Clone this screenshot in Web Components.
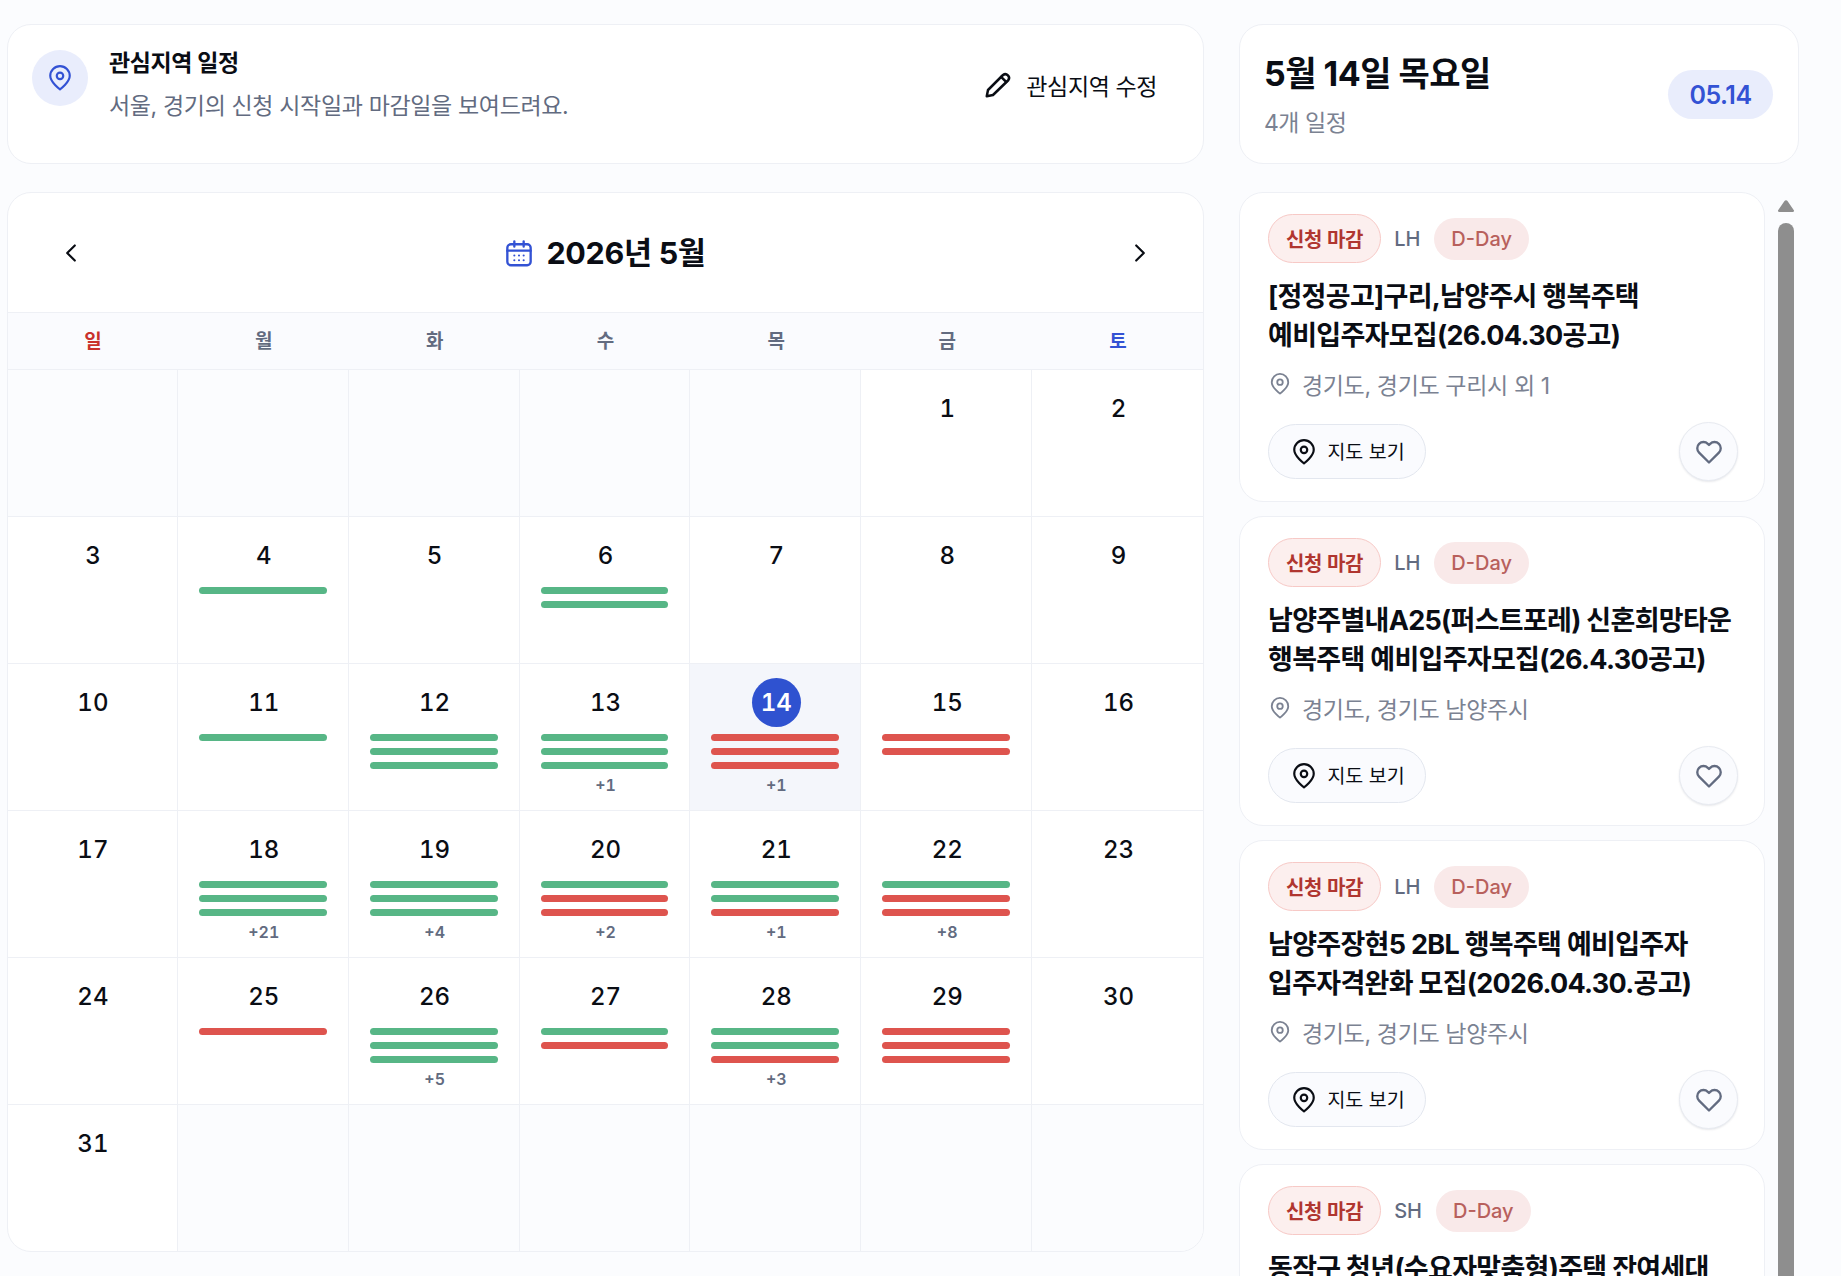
<!DOCTYPE html>
<html lang="ko">
<head>
<meta charset="utf-8">
<title>관심지역 일정</title>
<style>
  html, body { margin: 0; height: 100%; }
  body {
    background: #fbfcfe;
    color: #0a0d14;
    font-family: "Inter", "Noto Sans CJK KR", sans-serif;
    overflow: hidden;
  }
</style>
</head>
<body>
<app-page>
  <region-card slot="region"></region-card>
  <date-card slot="date"></date-card>
  <cal-view slot="calendar"></cal-view>
  <notice-list slot="list">
    <notice-card org="LH">
      <span slot="title">[정정공고]구리,남양주시 행복주택<br>예비입주자모집(26.04.30공고)</span>
      <span slot="place">경기도, 경기도 구리시 외 1</span>
    </notice-card>
    <notice-card org="LH">
      <span slot="title">남양주별내A25(퍼스트포레) 신혼희망타운<br>행복주택 예비입주자모집(26.4.30공고)</span>
      <span slot="place">경기도, 경기도 남양주시</span>
    </notice-card>
    <notice-card org="LH">
      <span slot="title">남양주장현5 2BL 행복주택 예비입주자<br>입주자격완화 모집(2026.04.30.공고)</span>
      <span slot="place">경기도, 경기도 남양주시</span>
    </notice-card>
    <notice-card org="SH">
      <span slot="title">동작구 청년(수요자맞춤형)주택 잔여세대</span>
    </notice-card>
  </notice-list>
</app-page>

<script>
const PIN = (color, w) => `<svg viewBox="0 0 24 24" fill="none" stroke="${color}" stroke-width="${w}" stroke-linecap="round" stroke-linejoin="round"><path d="M12 22.500C12 22.500 3 16 3 10a9 9 0 0 1 18 0C21 16 12 22.500 12 22.500z"/><circle cx="12" cy="10" r="3"/></svg>`;

class AppPage extends HTMLElement {
  connectedCallback() {
    this.attachShadow({ mode: 'open' });
    this.shadowRoot.innerHTML = `
      <style>
        :host {
          display: grid;
          grid-template-columns: 1197px 560px;
          grid-template-rows: 140px 1fr;
          column-gap: 35px;
          row-gap: 28px;
          box-sizing: border-box;
          height: 1276px;
          padding: 24px 0 0 7px;
          overflow: hidden;
        }
      </style>
      <slot name="region"></slot>
      <slot name="date"></slot>
      <slot name="calendar"></slot>
      <slot name="list"></slot>
    `;
  }
}

class RegionCard extends HTMLElement {
  connectedCallback() {
    this.attachShadow({ mode: 'open' });
    this.shadowRoot.innerHTML = `
      <style>
        :host {
          display: flex;
          box-sizing: border-box;
          height: 140px;
          padding: 25px 46px 0 24px;
          background: #fff;
          border: 1px solid #eef0f5;
          border-radius: 24px;
        }
        .icon {
          flex: none;
          width: 56px;
          height: 56px;
          border-radius: 50%;
          background: #e9edfc;
          display: flex;
          align-items: center;
          justify-content: center;
        }
        .icon svg { width: 26px; height: 26px; }
        .text { margin-left: 21px; flex: 1; margin-top: -1px; }
        .title { font-size: 23px; font-weight: 600; line-height: 28px; letter-spacing: -0.45px; }
        .sub { font-size: 23px; line-height: 32px; margin-top: 13px; color: #626b80; letter-spacing: -0.35px; }
        .edit { display: flex; align-items: center; gap: 13px; height: 30px; margin-top: 20px; font-size: 23px; letter-spacing: -0.4px; }
        .edit svg { width: 30px; height: 30px; }
      </style>
      <div class="icon">${PIN('#3352d4', 2)}</div>
      <div class="text">
        <div class="title">관심지역 일정</div>
        <div class="sub">서울, 경기의 신청 시작일과 마감일을 보여드려요.</div>
      </div>
      <div class="edit">
        <svg viewBox="0 0 24 24" fill="none" stroke="#0a0d14" stroke-width="2" stroke-linecap="round" stroke-linejoin="round"><path d="M3 21l1-5L16 4a3 3 0 0 1 4.200 4.200L8 20z"/><path d="M14.500 5.500l4 4"/></svg>
        <span>관심지역 수정</span>
      </div>
    `;
  }
}

class DateCard extends HTMLElement {
  connectedCallback() {
    this.attachShadow({ mode: 'open' });
    this.shadowRoot.innerHTML = `
      <style>
        :host {
          display: flex;
          align-items: center;
          justify-content: space-between;
          box-sizing: border-box;
          height: 140px;
          padding: 0 25px 0 24px;
          background: #fff;
          border: 1px solid #eef0f5;
          border-radius: 24px;
        }
        .info { padding-top: 2px; }
        .day { font-size: 34px; font-weight: 700; line-height: 44px; letter-spacing: -0.5px; }
        .count { font-size: 23px; line-height: 30px; margin-top: 12px; color: #7b8292; letter-spacing: -0.5px; }
        .pill {
          box-sizing: border-box;
          height: 49px;
          width: 105px;
          padding-top: 2px;
          border-radius: 25px;
          background: #e9edfc;
          color: #3352d4;
          font-size: 25px;
          font-weight: 600;
          letter-spacing: -0.5px;
          display: flex;
          align-items: center;
          justify-content: center;
        }
      </style>
      <div class="info">
        <div class="day">5월 14일 목요일</div>
        <div class="count">4개 일정</div>
      </div>
      <div class="pill">05.14</div>
    `;
  }
}

// g = green bar, r = red bar
const DAYS = {
  4: ['g'], 6: ['g', 'g'], 11: ['g'],
  12: ['g', 'g', 'g'], 13: ['g', 'g', 'g', 1], 14: ['r', 'r', 'r', 1], 15: ['r', 'r'],
  18: ['g', 'g', 'g', 21], 19: ['g', 'g', 'g', 4], 20: ['g', 'r', 'r', 2], 21: ['g', 'g', 'r', 1], 22: ['g', 'r', 'r', 8],
  25: ['r'], 26: ['g', 'g', 'g', 5], 27: ['g', 'r'], 28: ['g', 'g', 'r', 3], 29: ['r', 'r', 'r']
};

class CalCell extends HTMLElement {
  set data({ day, items, today }) {
    if (!this.shadowRoot) this.attachShadow({ mode: 'open' });
    const bars = (items || []).filter(i => typeof i === 'string')
      .map(i => `<div class="bar ${i}"></div>`).join('');
    const more = (items || []).find(i => typeof i === 'number');
    this.shadowRoot.innerHTML = `
      <style>
        :host {
          display: flex;
          flex-direction: column;
          align-items: center;
          box-sizing: border-box;
          padding: 14px 21px 0;
          border-top: 1px solid #eef0f5;
          border-right: 1px solid #eef0f5;
          min-width: 0;
          font-variant-numeric: tabular-nums;
        }
        :host(:nth-child(7n)) { border-right: 0; }
        :host([empty]) { background: #fbfcfe; }
        :host([today]) { background: #f4f6fb; }
        .num {
          flex: none;
          width: 49px;
          height: 49px;
          margin-left: 2px;
          border-radius: 50%;
          display: flex;
          align-items: center;
          justify-content: center;
          font-size: 24px;
          font-weight: 550;
          margin-bottom: 7px;
        }
        .today { background: #2f52d0; color: #fff; font-weight: 600; }
        .bar { align-self: stretch; height: 7px; border-radius: 4px; margin-bottom: 7px; }
        .g { background: #57b686; }
        .r { background: #de544e; }
        .more { margin-left: 2px; font-size: 16px; font-weight: 600; color: #626b80; line-height: 18px; }
      </style>
      ${day ? `<div class="num ${today ? 'today' : ''}">${day}</div>` : ''}
      ${bars}
      ${more ? `<div class="more">+${more}</div>` : ''}
    `;
  }
}

class CalView extends HTMLElement {
  connectedCallback() {
    this.attachShadow({ mode: 'open' });
    const names = ['일', '월', '화', '수', '목', '금', '토'];
    this.shadowRoot.innerHTML = `
      <style>
        :host {
          display: block;
          box-sizing: border-box;
          height: 1060px;
          background: #fff;
          border: 1px solid #eef0f5;
          border-radius: 24px;
          overflow: hidden;
        }
        .head {
          height: 119px;
          display: flex;
          align-items: center;
          justify-content: space-between;
          padding: 0 50px 0 50px;
        }
        .head svg.nav { width: 26px; height: 26px; }
        .month { display: flex; align-items: center; gap: 13px; font-size: 30.500px; font-weight: 700; letter-spacing: -0.3px; }
        .month span { padding-bottom: 3px; }
        .month svg { width: 28px; height: 28px; }
        .week {
          display: grid;
          grid-template-columns: repeat(7, 1fr);
          height: 56px;
          margin-left: -1px;
          background: #fafbfe;
          border-top: 1px solid #eef0f5;
        }
        .week div {
          display: flex;
          align-items: center;
          justify-content: center;
          padding: 0 0 4px 1px;
          font-size: 19px;
          font-weight: 600;
          color: #626b80;
        }
        .week .sun { color: #c9302c; }
        .week .sat { color: #3352d4; }
        .grid {
          display: grid;
          grid-template-columns: repeat(7, 1fr);
          grid-auto-rows: 147px;
          margin-left: -1px;
        }
      </style>
      <div class="head">
        <svg class="nav" viewBox="0 0 24 24" fill="none" stroke="#0a0d14" stroke-width="2" stroke-linecap="round" stroke-linejoin="round"><path d="M15.500 5l-7 7 7 7"/></svg>
        <div class="month">
          <svg viewBox="0 0 24 24" fill="none" stroke="#3352d4" stroke-width="2" stroke-linecap="round" stroke-linejoin="round"><rect x="2" y="4.500" width="20" height="18" rx="3"/><path d="M2 10h20M8 2v4.500M16 2v4.500"/><path d="M8 14.200h.01M12 14.200h.01M16 14.200h.01M8 18.200h.01M12 18.200h.01M16 18.200h.01" stroke-width="1.800"/></svg>
          <span>2026년 5월</span>
        </div>
        <svg class="nav" viewBox="0 0 24 24" fill="none" stroke="#0a0d14" stroke-width="2" stroke-linecap="round" stroke-linejoin="round"><path d="M8.500 5l7 7-7 7"/></svg>
      </div>
      <div class="week">${names.map((n, i) => `<div class="${i === 0 ? 'sun' : i === 6 ? 'sat' : ''}">${n}</div>`).join('')}</div>
      <div class="grid"></div>
    `;
    const grid = this.shadowRoot.querySelector('.grid');
    // May 2026 starts on a Friday
    for (let i = 0; i < 42; i++) {
      const day = i - 4 >= 1 && i - 4 <= 31 ? i - 4 : 0;
      const cell = document.createElement('cal-cell');
      if (!day) cell.setAttribute('empty', '');
      if (day === 14) cell.setAttribute('today', '');
      cell.data = { day, items: DAYS[day], today: day === 14 };
      grid.appendChild(cell);
    }
  }
}

class NoticeList extends HTMLElement {
  connectedCallback() {
    this.attachShadow({ mode: 'open' });
    this.shadowRoot.innerHTML = `
      <style>
        :host { display: flex; min-height: 0; overflow: hidden; }
        .items { width: 526px; flex: none; display: flex; flex-direction: column; gap: 14px; }
        .bar { width: 16px; margin-left: 13px; flex: none; display: flex; flex-direction: column; padding-top: 8px; }
        .bar svg { width: 16px; height: 12px; display: block; }
        .thumb { flex: 1; margin-top: 11px; background: #8e8e8e; border-radius: 8px 8px 0 0; }
      </style>
      <div class="items"><slot></slot></div>
      <div class="bar">
        <svg viewBox="0 0 16 12"><path d="M6.500 1a1.800 1.800 0 0 1 3 0L15.700 10a1.200 1.200 0 0 1-1 2H1.300a1.200 1.200 0 0 1-1-2z" fill="#8e8e8e"/></svg>
        <div class="thumb"></div>
      </div>
    `;
  }
}

class NoticeCard extends HTMLElement {
  connectedCallback() {
    this.attachShadow({ mode: 'open' });
    this.shadowRoot.innerHTML = `
      <style>
        :host {
          display: block;
          flex: none;
          box-sizing: border-box;
          height: 310px;
          padding: 21px 26px 0 28px;
          background: #fff;
          border: 1px solid #eef0f5;
          border-radius: 24px;
        }
        .tags { display: flex; align-items: center; height: 49px; font-size: 20px; }
        .status {
          box-sizing: border-box;
          height: 49px;
          padding: 0 17px;
          display: flex;
          align-items: center;
          border: 1px solid #f7c9c6;
          border-radius: 25px;
          background: #fcefee;
          color: #b03630;
          font-weight: 600;
          letter-spacing: -0.3px;
        }
        .org { margin: 0 14px 0 13px; color: #626b80; font-weight: 500; }
        .dday {
          height: 42px;
          padding: 0 17px;
          display: flex;
          align-items: center;
          border-radius: 21px;
          background: #f9e9e9;
          color: #b8605c;
          font-weight: 500;
        }
        .title { margin-top: 14px; font-size: 27px; font-weight: 700; line-height: 39px; letter-spacing: -0.7px; white-space: nowrap; }
        .place { display: flex; align-items: center; gap: 11px; margin-top: 13px; height: 32px; padding-left: 1px; font-size: 23px; color: #7b8292; letter-spacing: -0.35px; }
        .place svg { width: 22px; height: 22px; flex: none; }
        .actions { display: flex; align-items: center; justify-content: space-between; margin-top: 22px; }
        .map {
          box-sizing: border-box;
          height: 55px;
          width: 158px;
          padding-left: 2px;
          display: flex;
          align-items: center;
          justify-content: center;
          gap: 10px;
          border: 1px solid #e3e7ef;
          border-radius: 28px;
          background: #fafbfe;
          font-size: 19.500px;
        }
        .map span { padding-bottom: 2px; }
        .map svg { width: 26px; height: 26px; }
        .heart {
          box-sizing: border-box;
          width: 59px;
          height: 59px;
          display: flex;
          align-items: center;
          justify-content: center;
          border: 1px solid #e8ebf1;
          border-radius: 50%;
          background: #fafbfe;
          box-shadow: 0 1px 2px rgba(20, 30, 60, .1);
        }
        .heart svg { width: 28px; height: 28px; }
      </style>
      <div class="tags">
        <div class="status">신청 마감</div>
        <div class="org">${this.getAttribute('org')}</div>
        <div class="dday">D-Day</div>
      </div>
      <div class="title"><slot name="title"></slot></div>
      <div class="place">${PIN('#7b8292', 2)}<slot name="place"></slot></div>
      <div class="actions">
        <div class="map">${PIN('#0a0d14', 2)}<span>지도 보기</span></div>
        <div class="heart"><svg viewBox="0 0 24 24" fill="none" stroke="#626b80" stroke-width="2" stroke-linejoin="round"><path d="M12 21L3.500 12.500a5.300 5.300 0 0 1 7.500-7.500l1 1 1-1a5.300 5.300 0 0 1 7.500 7.500z"/></svg></div>
      </div>
    `;
  }
}

customElements.define('app-page', AppPage);
customElements.define('region-card', RegionCard);
customElements.define('date-card', DateCard);
customElements.define('cal-cell', CalCell);
customElements.define('cal-view', CalView);
customElements.define('notice-list', NoticeList);
customElements.define('notice-card', NoticeCard);
</script>
</body>
</html>
